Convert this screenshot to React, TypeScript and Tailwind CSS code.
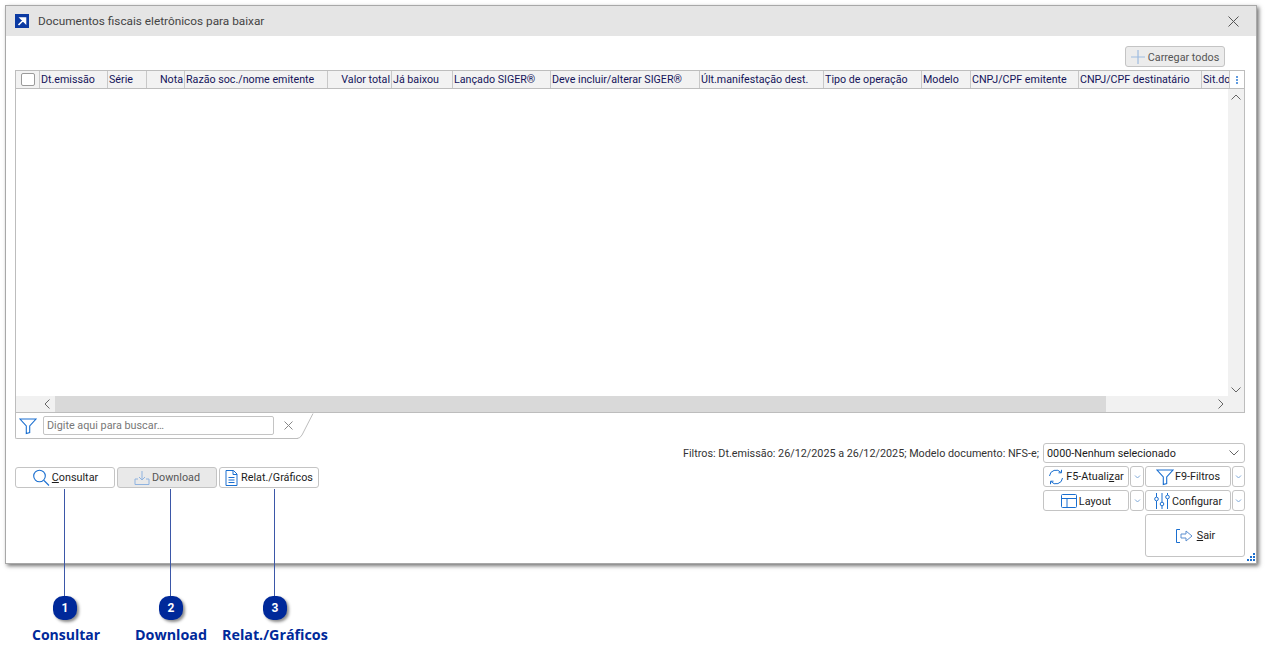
import React from "react";

const B = "#1a6fd0";
const cols: [string, number, boolean?][] = [
  ["Dt.emissão", 68],
  ["Série", 39],
  ["Nota", 38, true],
  ["Razão soc./nome emitente", 143],
  ["Valor total", 64, true],
  ["Já baixou", 61],
  ["Lançado SIGER®", 98],
  ["Deve incluir/alterar SIGER®", 149],
  ["Últ.manifestação dest.", 124],
  ["Tipo de operação", 98],
  ["Modelo", 49],
  ["CNPJ/CPF emitente", 108],
  ["CNPJ/CPF destinatário", 123],
  ["Sit.do", 28],
];

const Btn = ({ className = "", children }: { className?: string; children?: React.ReactNode }) => (
  <div className={`flex items-center justify-center rounded-[3px] border border-[#c4c4c4] ${className}`}>{children}</div>
);

const Drop = () => (
  <Btn className="h-[21px] w-full bg-white">
    <svg width="7" height="4" viewBox="0 0 7 4"><path d="M1 .5 3.5 3 6 .5" fill="none" stroke="#7fa8d8" strokeWidth="1" /></svg>
  </Btn>
);

const Filter = ({ s = 18 }: { s?: number }) => (
  <svg width={s} height={s} viewBox="0 0 18 18" fill="none" stroke={B} strokeWidth="1.1"><path d="M1 2h16l-6.3 7v6.5L7.3 16.6V9z" /></svg>
);

const Callout = ({ n, x, lx }: { n: string; x: string; lx: string }) => (
  <>
    <div className={`absolute top-[489px] h-[108px] w-px bg-[#3b57a8] ${x}`} />
    <div className={`absolute top-[596px] flex h-6 w-6 items-center justify-center rounded-[10px] bg-[#00299a] text-[12px] font-bold text-white shadow-[2px_2px_3px_rgba(0,0,0,0.45)] ${lx}`}>{n}</div>
  </>
);

export default function App() {
  return (
    <div className="relative h-[662px] w-[1280px] overflow-hidden bg-white font-['Roboto',sans-serif] text-[10.8px] text-[#1c1c1c]">
      <div className="ml-[5px] mt-[5px] flex h-[559px] w-[1252px] flex-col border border-[#a8a8a8] bg-white shadow-[2px_2px_4px_rgba(0,0,0,0.55)]">
        <div className="flex h-[30px] shrink-0 items-center bg-[#e5e5e5] pl-[9px] pr-[17px]">
          <div className="flex h-[14px] w-[14px] items-center justify-center bg-[#0b3aa3]">
            <svg width="10" height="10" viewBox="0 0 10 10"><path d="M1.5 9 7 3.5M3.5 2h5v5z" stroke="#fff" strokeWidth="1.6" fill="#fff" /></svg>
          </div>
          <span className="ml-[9px] pt-[1px] text-[11.8px] text-[#444]">Documentos fiscais eletrônicos para baixar</span>
          <svg className="ml-auto" width="11" height="11" viewBox="0 0 11 11"><path d="M.5.5l10 10M10.5.5l-10 10" stroke="#555" strokeWidth="1" /></svg>
        </div>

        <div className="flex flex-1 flex-col pl-[9px] pr-[11px]">
          <div className="flex h-[34px] shrink-0 items-end justify-end pb-[3px] pr-[20px]">
            <div className="flex h-[21px] w-[100px] items-center justify-center gap-[3px] rounded-[3px] border border-[#c4c4c4] bg-[#ececec] text-[#555]">
              <svg width="14" height="14" viewBox="0 0 14 14"><path d="M7 0v14M0 7h14" stroke="#9dbbe0" strokeWidth="1.2" /></svg>
              <span className="pt-[3px]">Carregar todos</span>
            </div>
          </div>

          <div className="flex h-[343px] w-[1230px] shrink-0 flex-col border border-[#bdbdbd]">
            <div className="flex h-[18px] shrink-0 border-b border-[#bdbdbd] bg-[#f2f2f2]">
              <div className="flex w-[24px] shrink-0 items-center justify-center border-r border-[#c8c8c8]">
                <div className="h-[13px] w-[14px] rounded-[2px] border border-[#9a9a9a] bg-white" />
              </div>
              {cols.map(([t, w, right]) => (
                <div key={t} style={{ width: w }} className={`flex shrink-0 items-center overflow-hidden whitespace-nowrap border-r border-[#c8c8c8] px-[1px] pt-[2px] text-[10.7px] text-[#14145a] last:border-r-0 ${right ? "justify-end" : ""}`}>{t}</div>
              ))}
              <div className="flex flex-1 flex-col items-center justify-center gap-[1px] bg-white">
                <i className="h-[2px] w-[2px] bg-[#5f9be0]" /><i className="h-[2px] w-[2px] bg-[#5f9be0]" /><i className="h-[2px] w-[2px] bg-[#5f9be0]" />
              </div>
            </div>
            <div className="flex min-h-0 flex-1">
              <div className="flex-1" />
              <div className="flex w-[16px] flex-col items-center justify-between bg-[#f1f1f1] pb-[3px] pt-[5px]">
                <svg width="10" height="6" viewBox="0 0 10 6"><path d="M.5 5.5 5 1l4.5 4.5" fill="none" stroke="#666" /></svg>
                <svg width="10" height="6" viewBox="0 0 10 6"><path d="M.5.5 5 5 9.5.5" fill="none" stroke="#666" /></svg>
              </div>
            </div>
            <div className="flex h-[16px] shrink-0 items-center bg-[#f1f1f1]">
              <div className="flex w-[39px] justify-center pl-[23px]">
                <svg width="6" height="10" viewBox="0 0 6 10"><path d="M5.5.5 1 5l4.5 4.5" fill="none" stroke="#666" /></svg>
              </div>
              <div className="h-full w-[1051px] bg-[#d9d9d9]" />
              <div className="flex flex-1 justify-end pr-[20px]">
                <svg width="6" height="10" viewBox="0 0 6 10"><path d="M.5.5 5 5 .5 9.5" fill="none" stroke="#666" /></svg>
              </div>
            </div>
          </div>

          <div className="relative flex h-[26px] w-[283px] shrink-0 items-center rounded-bl-[2px] border-b border-l border-[#bdbdbd]">
            <div className="ml-[3px]"><Filter /></div>
            <div className="ml-[6px] flex h-[19px] w-[231px] shrink-0 items-center rounded-[2px] border border-[#c4c4c4] px-[3px] pt-[1px] text-[#777]">Digite aqui para buscar…</div>
            <svg className="ml-[10px] shrink-0" width="9" height="9" viewBox="0 0 9 9"><path d="M.5.5l8 8M8.5.5l-8 8" stroke="#888" /></svg>
            <svg className="absolute left-[281px] top-0" width="17" height="26" viewBox="0 0 17 26"><path d="M16 .5 5 22q-2 3.5-5 3.5" fill="none" stroke="#bdbdbd" /></svg>
          </div>

          <div className="flex flex-1 items-start justify-between">
            <div className="mt-[28px] flex gap-[2px]">
              <Btn className="h-[21px] w-[100px] gap-[2px] bg-white">
                <svg width="18" height="18" viewBox="0 0 18 18" fill="none" stroke={B} strokeWidth="1.1"><circle cx="7.5" cy="7" r="5.8" /><path d="m12 11.5 5 5" /></svg>
                <span className="pt-[2px]"><u>C</u>onsultar</span>
              </Btn>
              <Btn className="h-[21px] w-[100px] gap-[2px] bg-[#e9e9e9] text-[#555]">
                <svg width="16" height="16" viewBox="0 0 16 16" fill="none" stroke="#8fb3e0"><path d="M8 1v9M5 7l3 3 3-3M4 9H1v5.5h14V9h-3" /></svg>
                <span className="pt-[2px]">Download</span>
              </Btn>
              <Btn className="h-[21px] w-[100px] gap-[3px] bg-white">
                <svg width="13" height="16" viewBox="0 0 13 16" fill="none" stroke={B}><path d="M1 .5h7.5L12 4v11.5H1zM8 .5V4.5h4M3.5 7.5h6M3.5 10h6M3.5 12.5h6" /></svg>
                <span className="pt-[2px]">Relat./Gráficos</span>
              </Btn>
            </div>

            <div className="mt-[4px] flex flex-col items-end">
              <div className="flex items-center gap-[4px]">
                <span className="pt-[3px] text-[#333]">Filtros: Dt.emissão: 26/12/2025 a 26/12/2025; Modelo documento: NFS-e;</span>
                <div className="flex h-[20px] w-[202px] items-center justify-between rounded-[3px] border border-[#c4c4c4] px-[3px]">
                  <span className="pt-[2px]">0000-Nenhum selecionado</span>
                  <svg className="mr-[2px]" width="10" height="6" viewBox="0 0 10 6"><path d="M.5.5 5 5 9.5.5" fill="none" stroke="#666" /></svg>
                </div>
              </div>
              <div className="mt-[3px] grid w-[202px] grid-cols-[86px_14px_86px_13px] gap-x-[1px] gap-y-[3px]">
                <Btn className="h-[21px] gap-[2px] bg-white">
                  <svg width="16" height="16" viewBox="0 0 16 16" fill="none" stroke={B}><path d="M1.5 7A6.5 6.5 0 0 1 13 3.5M14.5 9A6.5 6.5 0 0 1 3 12.5M13.5 .8v3h-3M2.5 15.2v-3h3" /></svg>
                  <span className="pt-[2px]">F5-Atuali<u>z</u>ar</span>
                </Btn>
                <Drop />
                <Btn className="h-[21px] gap-[1px] bg-white"><Filter /><span className="pt-[2px]">F9-Filtros</span></Btn>
                <Drop />
                <Btn className="h-[21px] gap-[2px] bg-white">
                  <svg width="16" height="14" viewBox="0 0 16 14" fill="none" stroke={B}><rect x=".5" y=".5" width="15" height="13" rx="1" /><path d="M.5 4.5h15M6 4.5v9" /></svg>
                  <span className="pt-[3px]">Layout</span>
                </Btn>
                <Drop />
                <Btn className="h-[21px] gap-[2px] bg-white">
                  <svg width="16" height="16" viewBox="0 0 16 16" fill="none" stroke={B}><path d="M2.5 0v4M2.5 8v8M8 0v9M8 13v3M13.5 0v2M13.5 6v10" /><circle cx="2.5" cy="6" r="1.8" /><circle cx="8" cy="11" r="1.8" /><circle cx="13.5" cy="4" r="1.8" /></svg>
                  <span className="pt-[3px]">Configurar</span>
                </Btn>
                <Drop />
              </div>
              <Btn className="mt-[3px] h-[43px] w-[100px] gap-[4px] bg-white">
                <svg width="18" height="14" viewBox="0 0 18 14" fill="none" stroke={B}><path d="M5 .5H1.5v13H5" /><path d="M6 5h5V2l6 5-6 5V9H6z" stroke="#5d8fd0" /></svg>
                <span className="pt-[2px]"><u>S</u>air</span>
              </Btn>
            </div>
          </div>
        </div>
      </div>

      <div className="absolute left-[1247px] top-[553px] grid grid-cols-3 gap-[1px]">
        {[0, 0, 1, 0, 1, 1, 1, 1, 1].map((v, i) => (
          <i key={i} className={`h-[2px] w-[2px] ${v ? "bg-[#1a6fd0]" : ""}`} />
        ))}
      </div>

      <Callout n="1" x="left-[64px]" lx="left-[53px]" />
      <Callout n="2" x="left-[170px]" lx="left-[159px]" />
      <Callout n="3" x="left-[274px]" lx="left-[263px]" />

      <div className="absolute left-[32px] top-[625px] font-['Open_Sans',sans-serif] text-[14px] font-bold leading-[20px] text-[#00299a]">Consultar</div>
      <div className="absolute left-[135px] top-[625px] font-['Open_Sans',sans-serif] text-[14.3px] font-bold leading-[20px] text-[#00299a]">Download</div>
      <div className="absolute left-[222px] top-[625px] font-['Open_Sans',sans-serif] text-[14.3px] font-bold leading-[20px] text-[#00299a]">Relat./Gráficos</div>
    </div>
  );
}
